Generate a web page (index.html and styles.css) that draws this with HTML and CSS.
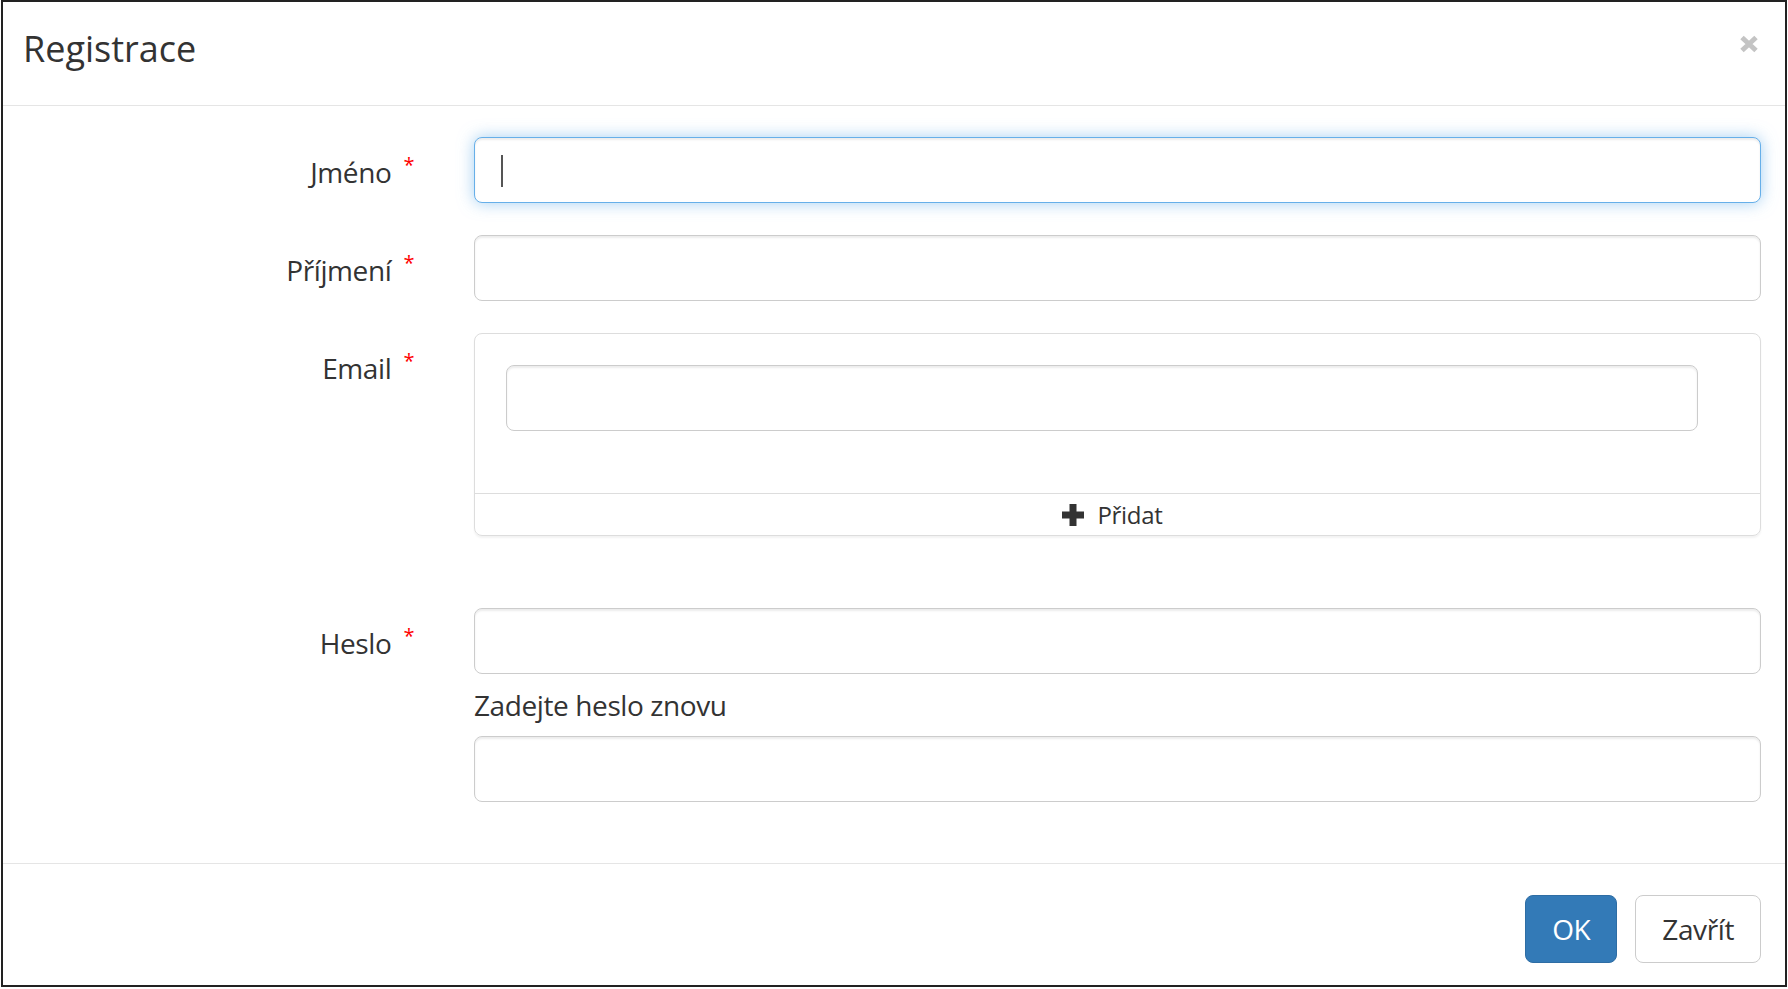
FILE: index.html
```html
<!DOCTYPE html>
<html lang="cs">
<head>
  <meta charset="UTF-8">
  <meta name="viewport" content="width=device-width, initial-scale=1.0">
  <title>Registrace</title>
  <link rel="stylesheet" href="styles.css">
</head>
<body>

  <div class="modal">
    <div class="modal-header">
      <h4 class="modal-title">Registrace</h4>
      <button type="button" class="close" aria-label="Zavřít">
        <svg width="20" height="18" viewBox="0 0 20 18">
          <path d="M3 2.5 L17 15.5 M17 2.5 L3 15.5" stroke="#c4c4c4" stroke-width="5" fill="none"/>
        </svg>
      </button>
    </div>

    <form class="modal-body">
      <div class="form-row">
        <label class="control-label" for="jmeno">Jméno<span class="req">*</span></label>
        <div class="field">
          <input type="text" id="jmeno" class="form-control focused">
          <span class="caret"></span>
        </div>
      </div>

      <div class="form-row">
        <label class="control-label" for="prijmeni">Příjmení<span class="req">*</span></label>
        <div class="field">
          <input type="text" id="prijmeni" class="form-control">
        </div>
      </div>

      <div class="form-row email-row">
        <label class="control-label" for="email">Email<span class="req">*</span></label>
        <div class="field">
          <div class="panel">
            <div class="panel-body">
              <input type="email" id="email" class="form-control">
            </div>
            <div class="panel-footer">
              <button type="button" class="btn-add">
                <svg width="22" height="22" viewBox="0 0 22 22">
                  <path d="M7.5 0 H14.5 V7.5 H22 V14.5 H14.5 V22 H7.5 V14.5 H0 V7.5 H7.5 Z" fill="#333"/>
                </svg>
                Přidat
              </button>
            </div>
          </div>
        </div>
      </div>

      <div class="form-row last">
        <label class="control-label" for="heslo">Heslo<span class="req">*</span></label>
        <div class="field">
          <input type="password" id="heslo" class="form-control">
          <label class="sub-label" for="heslo2">Zadejte heslo znovu</label>
          <input type="password" id="heslo2" class="form-control">
        </div>
      </div>
    </form>

    <div class="modal-footer">
      <button type="button" class="btn btn-primary">OK</button>
      <button type="button" class="btn btn-default">Zavřít</button>
    </div>
  </div>

</body>
</html>
```

FILE: styles.css
```css
* {
  box-sizing: border-box;
}
body {
  margin: 0;
  background: #fff;
  color: #333;
  font-family: "Open Sans", "Liberation Sans", sans-serif;
  font-size: 28px;
  letter-spacing: -0.4px;
}
.modal {
  width: 1786px;
  margin-left: 1px;
  border: 2px solid #222;
  background: #fff;
}

/* header */
.modal-header {
  display: flex;
  justify-content: space-between;
  align-items: flex-start;
  height: 104px;
  padding: 27px 26px 0 20px;
  border-bottom: 1px solid #e5e5e5;
}
.modal-title {
  margin: 0;
  font-size: 36px;
  font-weight: 400;
  line-height: 40px;
  letter-spacing: 0;
}
.close {
  margin-top: 6px;
  padding: 0;
  border: none;
  background: none;
  line-height: 0;
  cursor: pointer;
}

/* form */
.modal-body {
  padding: 31px 24px 61px 0;
}
.form-row {
  display: grid;
  grid-template-columns: 441px 1fr;
  column-gap: 30px;
  margin-bottom: 32px;
}
.form-row.email-row {
  margin-bottom: 72px;
}
.form-row.last {
  margin-bottom: 0;
}
.control-label {
  padding: 15px 30px 0 0;
  text-align: right;
  line-height: 40px;
}
.req {
  margin-left: 12px;
  color: #f00;
  font-size: 20px;
  line-height: 0;
  vertical-align: 11px;
}
.field {
  position: relative;
}
.form-control {
  display: block;
  width: 100%;
  height: 66px;
  padding: 0 25px;
  font-family: inherit;
  font-size: 28px;
  color: #555;
  background: #fff;
  border: 1px solid #ccc;
  border-radius: 8px;
  box-shadow: inset 0 2px 2px rgba(0,0,0,0.075);
  outline: none;
}
.form-control.focused {
  border-color: #66afe9;
  caret-color: transparent;
  box-shadow: inset 0 2px 2px rgba(0,0,0,0.075), 0 0 16px rgba(102,175,233,0.6);
}
.caret {
  position: absolute;
  left: 27px;
  top: 18px;
  width: 2px;
  height: 32px;
  background: #555;
}
.sub-label {
  display: block;
  margin: 11px 0;
  line-height: 40px;
}

/* email list panel */
.panel {
  border: 1px solid #ddd;
  border-radius: 8px;
  box-shadow: 0 2px 2px rgba(0,0,0,0.05);
}
.panel-body {
  padding: 31px 62px 62px 31px;
}
.panel-footer {
  display: flex;
  justify-content: center;
  align-items: center;
  height: 42px;
  border-top: 1px solid #ddd;
}
.btn-add {
  display: flex;
  align-items: center;
  gap: 13px;
  margin-right: 10px;
  padding: 0;
  border: none;
  background: none;
  color: #333;
  font-family: inherit;
  font-size: 24px;
  letter-spacing: -0.3px;
  cursor: pointer;
}

/* footer buttons */
.modal-footer {
  display: flex;
  justify-content: flex-end;
  gap: 18px;
  padding: 31px 24px 22px;
  border-top: 1px solid #e5e5e5;
}
.btn {
  height: 68px;
  padding: 0 26px;
  font-family: inherit;
  font-size: 28px;
  letter-spacing: -0.4px;
  border: 1px solid #ccc;
  border-radius: 8px;
  cursor: pointer;
}
.btn-primary {
  background: #337ab7;
  border-color: #2e6da4;
  color: #fff;
}
.btn-default {
  background: #fff;
  color: #333;
}
```
